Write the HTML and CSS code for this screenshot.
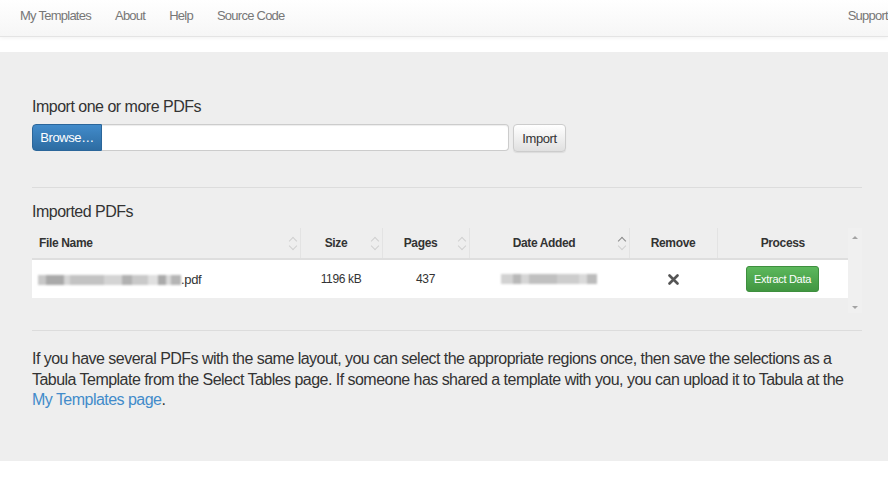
FILE: index.html
```html
<!DOCTYPE html>
<html lang="en">
<head>
    <meta charset="UTF-8">
    <title>Tabula</title>
    <link rel="stylesheet" href="styles.css">
</head>
<body>
    <!-- Top navigation -->
    <nav class="navbar">
        <a class="nav-link" href="#">My Templates</a>
        <a class="nav-link" href="#">About</a>
        <a class="nav-link" href="#">Help</a>
        <a class="nav-link" href="#">Source Code</a>
        <a class="nav-link nav-right" href="#">Support</a>
    </nav>

    <div class="jumbotron">
        <h4 class="section-title">Import one or more PDFs</h4>
        <div class="upload-row">
            <div class="file-group">
                <span class="btn btn-primary">Browse&hellip;</span>
                <input class="file-name" type="text">
            </div>
            <button class="btn btn-default">Import</button>
        </div>

        <hr>

        <h4 class="section-title">Imported PDFs</h4>
        <div class="table-wrap">
            <table class="files-table">
                <thead>
                    <tr>
                        <th class="col-name sortable">File Name</th>
                        <th class="col-size sortable">Size</th>
                        <th class="col-pages sortable">Pages</th>
                        <th class="col-date sortable sorted">Date Added</th>
                        <th class="col-remove">Remove</th>
                        <th class="col-process">Process</th>
                    </tr>
                </thead>
                <tbody>
                    <tr>
                        <td class="col-name"><span class="blurred blur-name"></span>.pdf</td>
                        <td>1196 kB</td>
                        <td>437</td>
                        <td><span class="blurred blur-date"></span></td>
                        <td>
                            <svg class="remove-icon" width="11" height="11" viewBox="0 0 11 11">
                                <path d="M1.5 1.5 L9.5 9.5 M9.5 1.5 L1.5 9.5" stroke="#555" stroke-width="2.6" stroke-linecap="round"/>
                            </svg>
                        </td>
                        <td><button class="btn btn-success">Extract Data</button></td>
                    </tr>
                </tbody>
            </table>
            <div class="scrollbar">
                <span class="arrow-up"></span>
                <span class="arrow-down"></span>
            </div>
        </div>

        <hr>

        <p class="info">If you have several PDFs with the same layout, you can select the appropriate regions once, then save the selections as a Tabula Template from the Select Tables page. If someone has shared a template with you, you can upload it to Tabula at the <a href="#">My Templates page</a>.</p>
    </div>
</body>
</html>
```

FILE: styles.css
```css
* {
    margin: 0;
    padding: 0;
    box-sizing: border-box;
}

body {
    font-family: "Liberation Sans", Arial, sans-serif;
    color: #333;
    background: #fff;
}

/* Navbar */
.navbar {
    display: flex;
    align-items: center;
    height: 37px;
    padding-left: 8px;
    padding-bottom: 6px;
    background: linear-gradient(to bottom, #ffffff 0%, #f6f6f6 100%);
    border-bottom: 1px solid #e4e4e4;
    box-shadow: 0 1px 4px rgba(0, 0, 0, 0.06);
    margin-bottom: 15px;
    overflow: hidden;
}

.nav-link {
    padding: 0 12px;
    font-size: 13px;
    letter-spacing: -0.75px;
    color: #777;
    text-decoration: none;
    white-space: nowrap;
}

.nav-right {
    margin-left: auto;
    margin-right: -12px;
}

/* Main panel */
.jumbotron {
    background: #eeeeee;
    padding: 45px 26px 50px 32px;
}

.section-title {
    font-size: 16px;
    font-weight: normal;
    line-height: 20px;
    letter-spacing: -0.5px;
    color: #333;
}

hr {
    border: 0;
    border-top: 1px solid #dcdcdc;
    margin-bottom: 14px;
}

/* Upload */
.upload-row {
    display: flex;
    margin-top: 7px;
    margin-bottom: 35px;
}

.file-group {
    display: flex;
    width: 477px;
    height: 27px;
}

.btn {
    display: inline-flex;
    align-items: center;
    justify-content: center;
    font-family: inherit;
    font-size: 13px;
    letter-spacing: -0.4px;
    border: 1px solid transparent;
    border-radius: 4px;
    cursor: pointer;
}

.btn-primary {
    width: 70px;
    color: #fff;
    border-color: #2b669a;
    border-radius: 4px 0 0 4px;
    background: linear-gradient(to bottom, #428bca 0%, #2d6ca2 100%);
}

.file-name {
    flex: 1;
    border: 1px solid #ccc;
    border-left: 0;
    border-radius: 0 4px 4px 0;
    background: #fff;
    box-shadow: inset 0 1px 1px rgba(0, 0, 0, 0.075);
}

.btn-default {
    width: 53px;
    height: 28px;
    margin-left: 4px;
    color: #333;
    border-color: #ccc;
    background: linear-gradient(to bottom, #ffffff 0%, #e0e0e0 100%);
    box-shadow: 0 1px 1px rgba(0, 0, 0, 0.08);
}

/* Imported files table */
.table-wrap {
    display: flex;
    margin-top: 6px;
    margin-bottom: 17px;
    height: 85px;
}

.files-table {
    width: 816px;
    border-collapse: collapse;
    align-self: flex-start;
    font-size: 12px;
    letter-spacing: -0.35px;
}

.files-table th {
    position: relative;
    height: 31px;
    font-weight: bold;
    text-align: center;
    color: #333;
    border-bottom: 2px solid #dedede;
    border-left: 1px solid #e3e3e3;
}

.files-table th.sortable {
    padding-right: 10px;
}

.files-table th:first-child {
    border-left: 0;
    text-align: left;
    padding-left: 7px;
}

.files-table td {
    height: 39px;
    background: #fff;
    text-align: center;
    color: #333;
}

.files-table td.col-name {
    text-align: left;
    padding-left: 6px;
    font-size: 13px;
}

.col-name { width: 268px; }
.col-size { width: 82px; }
.col-pages { width: 87px; }
.col-date { width: 160px; }
.col-remove { width: 88px; }
.col-process { width: 131px; }

/* sort arrows */
.sortable::before,
.sortable::after {
    content: '';
    position: absolute;
    right: 4px;
    width: 5px;
    height: 5px;
    border-left: 1.5px solid #d0d0d0;
    border-top: 1.5px solid #d0d0d0;
}

.sortable::before {
    top: 10px;
    transform: rotate(45deg);
}

.sortable::after {
    top: 15px;
    transform: rotate(225deg);
}

.sorted::before {
    border-color: #8a8a8a;
}

/* blurred private values */
.blurred {
    display: inline-block;
    height: 10px;
    vertical-align: -1px;
    filter: blur(1px);
}

.blur-name {
    width: 143px;
    background: linear-gradient(to right,
        #c8c8c8 0, #c8c8c8 8px, #a9a9a9 8px, #a9a9a9 26px, #d6d6d6 26px, #d6d6d6 32px,
        #c3c3c3 32px, #c3c3c3 66px, #d4d4d4 66px, #d4d4d4 84px, #b1b1b1 84px, #b1b1b1 94px,
        #c9c9c9 94px, #c9c9c9 110px, #e0e0e0 110px, #e0e0e0 120px, #aaaaaa 120px, #aaaaaa 128px,
        #d9d9d9 128px, #d9d9d9 133px, #b5b5b5 133px, #b5b5b5 143px);
}

.blur-date {
    width: 96px;
    background: linear-gradient(to right,
        #d2d2d2 0, #d2d2d2 12px, #b8b8b8 12px, #b8b8b8 20px, #d6d6d6 20px, #d6d6d6 28px,
        #c0c0c0 28px, #c0c0c0 56px, #cdcdcd 56px, #cdcdcd 78px, #dadada 78px, #dadada 86px,
        #bcbcbc 86px, #bcbcbc 96px);
}

.remove-icon {
    vertical-align: middle;
}

.btn-success {
    width: 73px;
    height: 26px;
    font-size: 11px;
    letter-spacing: -0.3px;
    color: #fff;
    border-color: #3e8f3e;
    border-radius: 3px;
    background: linear-gradient(to bottom, #5cb85c 0%, #419641 100%);
}

/* fake scrollbar */
.scrollbar {
    width: 14px;
    display: flex;
    flex-direction: column;
    justify-content: space-between;
    align-items: center;
    padding: 8px 0 4px;
    background: #f0f0f0;
}

.arrow-up,
.arrow-down {
    width: 0;
    height: 0;
    border-left: 3px solid transparent;
    border-right: 3px solid transparent;
}

.arrow-up {
    border-bottom: 3px solid #a3a3a3;
}

.arrow-down {
    border-top: 3px solid #a3a3a3;
}

/* bottom text */
.info {
    margin-top: 18px;
    font-size: 16px;
    line-height: 20.7px;
    letter-spacing: -0.53px;
    color: #333;
}

.info a {
    color: #428bca;
    text-decoration: none;
}
```
